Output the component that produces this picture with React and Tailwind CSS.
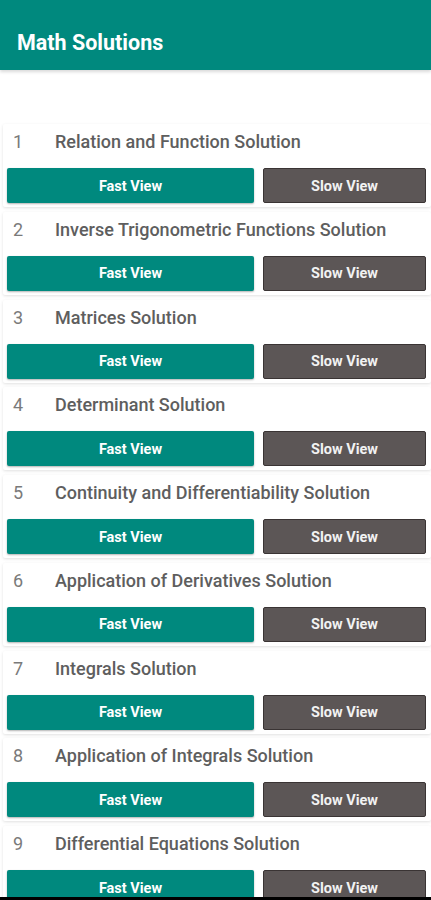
const items = [
  'Relation and Function Solution',
  'Inverse Trigonometric Functions Solution',
  'Matrices Solution',
  'Determinant Solution',
  'Continuity and Differentiability Solution',
  'Application of Derivatives Solution',
  'Integrals Solution',
  'Application of Integrals Solution',
  'Differential Equations Solution',
]

function Row({ n, title }) {
  return (
    <div className="ml-[3px] flex h-[83px] shrink-0 flex-col rounded-[2px] bg-white shadow-[0_1px_3px_rgba(0,0,0,0.12)]">
      <div className="flex h-[44px] items-center pb-[9px] text-[18px] text-[#5e5e5e]">
        <span className="w-[52px] pl-[10px] font-normal text-[#7a7a7a]">{n}</span>
        <span className="font-medium">{title}</span>
      </div>
      <div className="flex gap-[9px] pl-[4px] pr-[5px]">
        <button className="h-[35px] w-[247px] rounded-[2px] bg-[#00897e] pt-[2px] text-[14.5px] font-bold text-white shadow-[0_1px_2px_rgba(0,0,0,0.3)]">
          Fast View
        </button>
        <button className="h-[35px] flex-1 rounded-[2px] border border-[#3a3434] bg-[#5c5656] pt-[2px] text-[14.5px] font-bold text-[#f2f2f2]">
          Slow View
        </button>
      </div>
    </div>
  )
}

export default function App() {
  return (
    <div className="flex h-[900px] flex-col overflow-hidden bg-white font-['Roboto',sans-serif]">
      <header className="flex h-[70px] shrink-0 items-end bg-[#00897e] pb-[11px] pl-[17px] shadow-[0_2px_3px_rgba(0,0,0,0.15)]">
        <h1 className="text-[21.5px] font-bold text-white">Math Solutions</h1>
      </header>
      <div className="flex flex-1 flex-col gap-[4.75px] overflow-hidden pt-[54px]">
        {items.map((t, i) => (
          <Row key={t} n={i + 1} title={t} />
        ))}
      </div>
      <div className="h-[3px] shrink-0 bg-black" />
    </div>
  )
}
